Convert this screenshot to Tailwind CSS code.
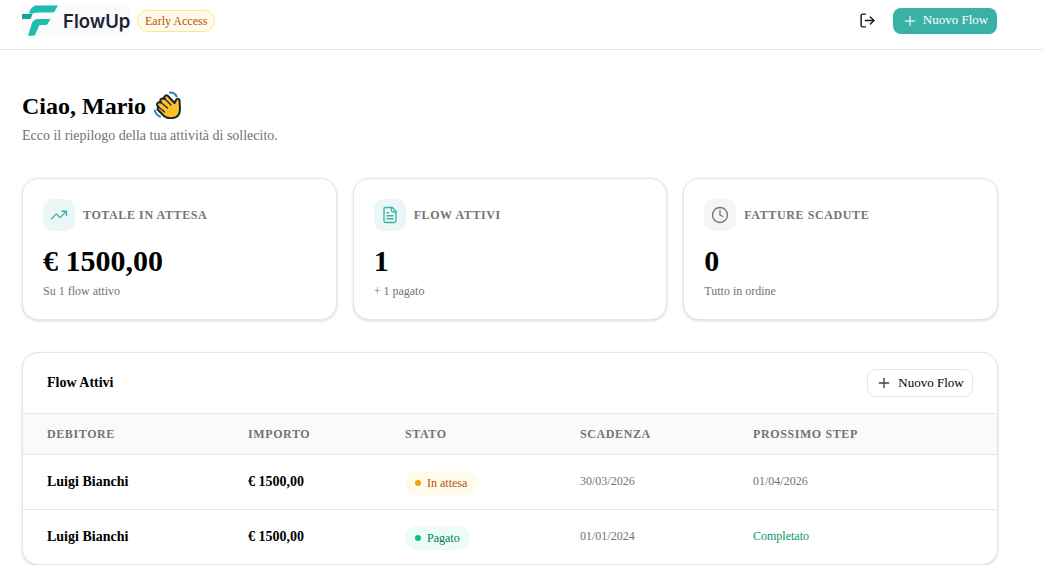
<!DOCTYPE html>
<html lang="it">
<head>
<meta charset="utf-8">
<title>FlowUp</title>
<script src="https://cdn.jsdelivr.net/npm/@tailwindcss/browser@4"></script>
</head>
<body class="bg-white font-['Liberation_Serif',serif] text-black overflow-hidden">
<header class="h-[50px] border-b border-[#e5e5e5] flex items-center justify-between pl-[22px] pr-[46px]">
  <div class="flex items-center gap-[7px]">
    <div class="flex items-center gap-[6px] bg-[#fafafa] h-[31px] w-[108px] -mt-[8px]">
      <svg viewBox="0 0 36 31" class="w-[36px] h-[31px] shrink-0">
        <path d="M13 0.5 H36 L32.5 6.5 Q32 7.5 30.5 7.5 H18 Q13 7.5 10.5 8.5 H7 Q8 3 13 0.5 Z" fill="#1dbdb1" />
        <path d="M0 9 H10.5 L8.5 14 H0 Z" fill="#17a398" />
        <path d="M15 14 H28.5 L25.5 19 Q25 20 23 20 H17.5 L13 30 Q12.5 30.8 11 30.8 H6 L10 18 Q11 15 15 14 Z" fill="#1dbdb1" />
      </svg>
      <span class="font-['Inter',sans-serif] font-semibold text-[18.5px] leading-none text-[#1a2536] -ml-[1px] mt-[2px]">FlowUp</span>
    </div>
    <span class="h-[22px] px-[7px] rounded-full border border-[#fde68a] bg-[#fffbeb] text-[#b45309] text-xs flex items-center -mt-[8px]">Early Access</span>
  </div>
  <div class="flex items-center gap-[17px] -mt-[8px]">
    <svg viewBox="0 0 24 24" class="w-[17px] h-[17px] -mt-[1px]" fill="none" stroke="#171717" stroke-width="2" stroke-linecap="round" stroke-linejoin="round"><path d="M9 21H5a2 2 0 0 1-2-2V5a2 2 0 0 1 2-2h4"/><path d="m16 17 5-5-5-5"/><path d="M21 12H9"/></svg>
    <button class="h-[26px] w-[104px] rounded-lg bg-[#38b2a6] text-white text-[13px] flex items-center justify-center gap-[5px]">
      <svg viewBox="0 0 24 24" class="w-4 h-4" fill="none" stroke="#fff" stroke-opacity="0.8" stroke-width="2" stroke-linecap="round"><path d="M5 12h14"/><path d="M12 5v14"/></svg>
      <span class="-mt-[1px]">Nuovo Flow</span>
    </button>
  </div>
</header>
<main class="w-[976px] ml-[22px]">
  <div class="pt-[40px] h-[128px]">
    <h1 class="text-2xl font-bold leading-[32px] flex items-center gap-[7px]">Ciao, Mario
      <svg viewBox="0 0 28 28" class="w-[28px] h-[28px] -mt-[2px]">
        <path d="M20 27 Q27 26 27 18 L26.5 9 Q25 6.5 23 9 L21.5 12 L15 5 Q13 3.5 11.5 5.5 Q11 6.5 12 8 Q9 6.5 7.5 8.5 Q7 10 8 11.5 Q5 10.5 4 13 Q3.8 14.5 5.5 16 Q4 17 5 19 L11 25 Q15 28 20 27 Z" fill="#fcc02e" stroke="#16242c" stroke-width="2" stroke-linejoin="round"/>
        <path d="M12 8 L18 14 M8 11.5 L14.5 17 M5.5 16 L11.5 21" stroke="#16242c" stroke-width="1.2" fill="none" stroke-linecap="round"/>
        <path d="M17 1.5 Q22 1.5 23.5 5.5" stroke="#1e88b5" stroke-width="2" fill="none" stroke-linecap="round"/>
        <path d="M2 19.5 Q2.5 23.5 7 25.5" stroke="#1e88b5" stroke-width="2" fill="none" stroke-linecap="round"/>
      </svg>
    </h1>
    <p class="text-sm leading-5 text-[#737373] mt-[4px]">Ecco il riepilogo della tua attività di sollecito.</p>
  </div>
  <section class="grid grid-cols-3 gap-4">
    <div class="h-[142px] rounded-2xl border border-[#e5e5e5] shadow-[0_1px_3px_rgba(0,0,0,0.15)] bg-white p-5">
      <div class="flex items-center gap-2">
        <div class="w-8 h-8 rounded-[10px] bg-[#ebf7f6] flex items-center justify-center">
          <svg viewBox="0 0 24 24" class="w-[18px] h-[18px]" fill="none" stroke="#38b2a6" stroke-width="1.75" stroke-linecap="round" stroke-linejoin="round"><path d="M22 7 13.5 15.5 8.5 10.5 2 17"/><path d="M16 7h6v6"/></svg>
        </div>
        <span class="text-xs font-bold tracking-[0.6px] text-[#737373]">TOTALE IN ATTESA</span>
      </div>
      <div class="text-[30px] font-bold leading-9 mt-[12px]">€ 1500,00</div>
      <div class="text-xs leading-4 text-[#737373] mt-[4px]">Su 1 flow attivo</div>
    </div>
    <div class="h-[142px] rounded-2xl border border-[#e5e5e5] shadow-[0_1px_3px_rgba(0,0,0,0.15)] bg-white p-5">
      <div class="flex items-center gap-2">
        <div class="w-8 h-8 rounded-[10px] bg-[#ebf7f6] flex items-center justify-center">
          <svg viewBox="0 0 24 24" class="w-[18px] h-[18px]" fill="none" stroke="#38b2a6" stroke-width="1.75" stroke-linecap="round" stroke-linejoin="round"><path d="M15 2H6a2 2 0 0 0-2 2v16a2 2 0 0 0 2 2h12a2 2 0 0 0 2-2V7Z"/><path d="M14 2v4a2 2 0 0 0 2 2h4"/><path d="M10 9H8"/><path d="M16 13H8"/><path d="M16 17H8"/></svg>
        </div>
        <span class="text-xs font-bold tracking-[0.6px] text-[#737373]">FLOW ATTIVI</span>
      </div>
      <div class="text-[30px] font-bold leading-9 mt-[12px]">1</div>
      <div class="text-xs leading-4 text-[#737373] mt-[4px]">+ 1 pagato</div>
    </div>
    <div class="h-[142px] rounded-2xl border border-[#e5e5e5] shadow-[0_1px_3px_rgba(0,0,0,0.15)] bg-white p-5">
      <div class="flex items-center gap-2">
        <div class="w-8 h-8 rounded-[10px] bg-[#f5f5f5] flex items-center justify-center">
          <svg viewBox="0 0 24 24" class="w-[18px] h-[18px]" fill="none" stroke="#737373" stroke-width="1.75" stroke-linecap="round" stroke-linejoin="round"><circle cx="12" cy="12" r="10"/><path d="M12 6v6l4 2"/></svg>
        </div>
        <span class="text-xs font-bold tracking-[0.6px] text-[#737373]">FATTURE SCADUTE</span>
      </div>
      <div class="text-[30px] font-bold leading-9 mt-[12px]">0</div>
      <div class="text-xs leading-4 text-[#737373] mt-[4px]">Tutto in ordine</div>
    </div>
  </section>
  <section class="mt-8 rounded-2xl border border-[#e5e5e5] shadow-[0_1px_3px_rgba(0,0,0,0.15)] bg-white overflow-hidden">
    <div class="h-[61px] border-b border-[#e5e5e5] flex items-center justify-between pl-6 pr-6">
      <h2 class="text-sm font-bold">Flow Attivi</h2>
      <button class="h-7 w-[106px] rounded-lg border border-[#e5e5e5] bg-white text-[13px] flex items-center justify-center gap-[6px]">
        <svg viewBox="0 0 24 24" class="w-4 h-4" fill="none" stroke="#404040" stroke-width="2" stroke-linecap="round"><path d="M5 12h14"/><path d="M12 5v14"/></svg>
        <span class="-mt-[1px]">Nuovo Flow</span>
      </button>
    </div>
    <table class="w-full table-fixed text-left">
      <thead>
        <tr class="h-[40px] bg-[#fafafa] border-b border-[#e5e5e5] text-xs font-bold tracking-[0.6px] text-[#737373]">
          <th class="w-[225px] pl-6">DEBITORE</th>
          <th class="w-[157px]">IMPORTO</th>
          <th class="w-[175px]">STATO</th>
          <th class="w-[173px]">SCADENZA</th>
          <th>PROSSIMO STEP</th>
        </tr>
      </thead>
      <tbody>
        <tr class="h-[55px] border-b border-[#e5e5e5]">
          <td class="pl-6 text-sm font-bold">Luigi Bianchi</td>
          <td class="text-sm font-bold">€ 1500,00</td>
          <td><span class="inline-flex items-center gap-[6px] h-6 px-[10px] rounded-full bg-[#fffbeb] text-[#b45309] text-xs mt-[3px]"><i class="w-[6px] h-[6px] rounded-full bg-[#f59e0b]"></i>In attesa</span></td>
          <td class="text-xs text-[#737373] pb-0.5">30/03/2026</td>
          <td class="text-xs text-[#737373] pb-0.5">01/04/2026</td>
        </tr>
        <tr class="h-[55px]">
          <td class="pl-6 text-sm font-bold">Luigi Bianchi</td>
          <td class="text-sm font-bold">€ 1500,00</td>
          <td><span class="inline-flex items-center gap-[6px] h-6 px-[10px] rounded-full bg-[#ecfdf5] text-[#047857] text-xs mt-[3px]"><i class="w-[6px] h-[6px] rounded-full bg-[#10b981]"></i>Pagato</span></td>
          <td class="text-xs text-[#737373] pb-0.5">01/01/2024</td>
          <td class="text-xs text-[#059669] pb-0.5">Completato</td>
        </tr>
      </tbody>
    </table>
  </section>
</main>
</body>
</html>
